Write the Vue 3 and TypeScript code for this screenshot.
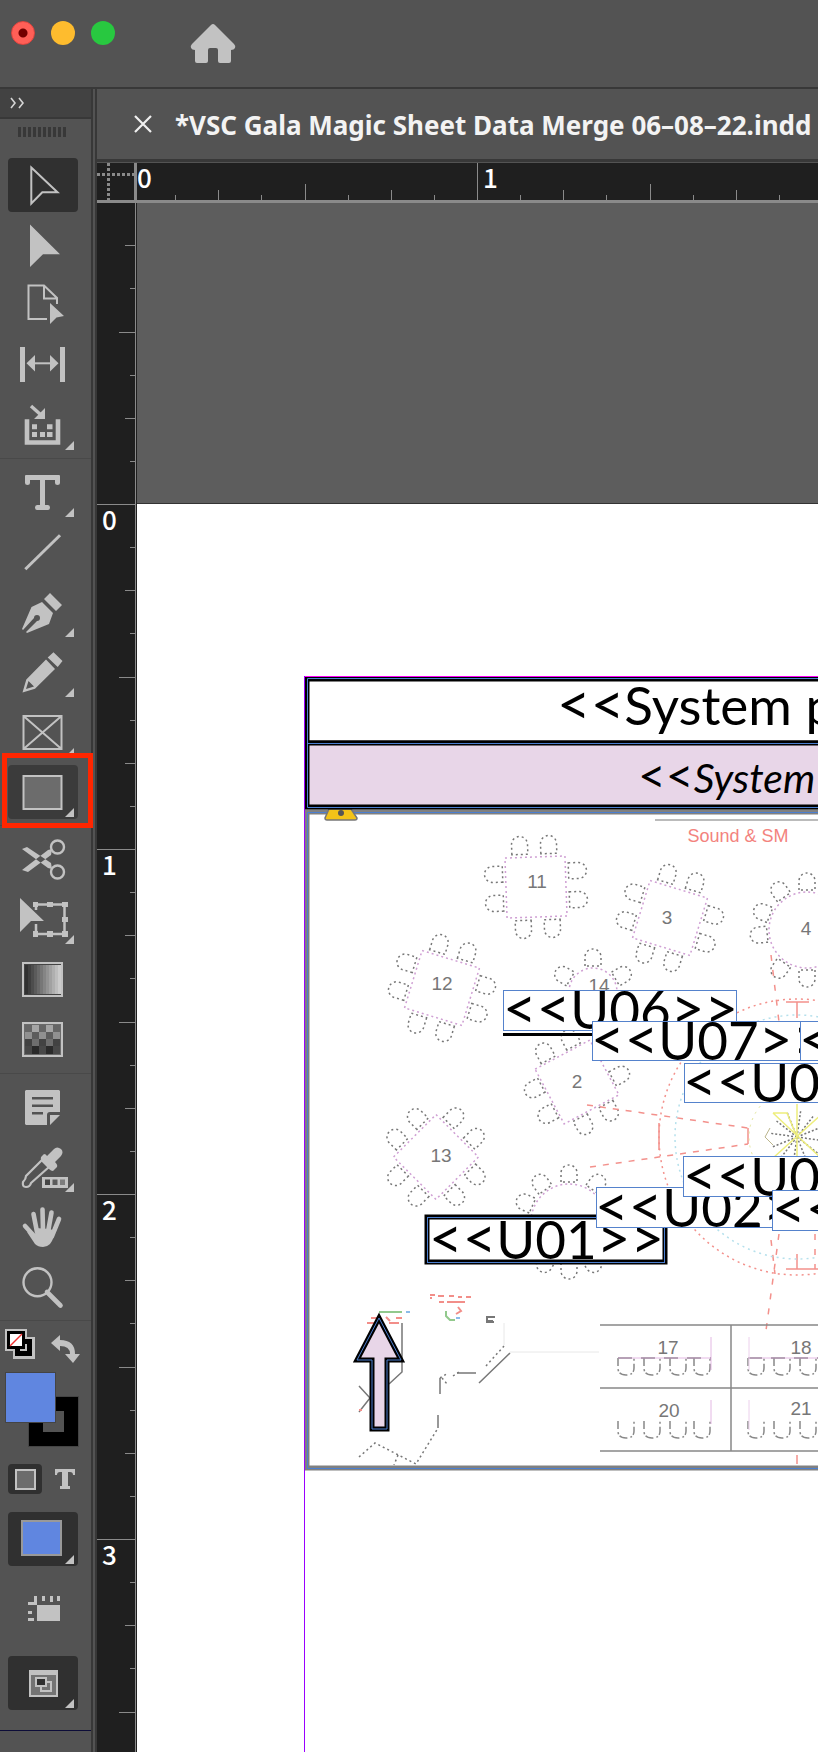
<script setup lang="ts">
interface Tool {
  id: string
  label: string
  more?: boolean
  active?: boolean
  marked?: boolean
}
interface Table {
  label: string
  x: number
  y: number
  lx: number
  ly: number
  turn: number
  half: number
  round?: boolean
  angles?: number[]
}
interface Tag {
  name: string
  close: string
  x: number
  y: number
  w: number
  h: number
  tx: number
  base: number
}

const groups: Tool[][] = [
  [
    { id: 'select', label: 'Selection Tool', active: true },
    { id: 'direct', label: 'Direct Selection Tool' },
    { id: 'page', label: 'Page Tool' },
    { id: 'gap', label: 'Gap Tool' },
    { id: 'collect', label: 'Content Collector Tool', more: true },
  ],
  [
    { id: 'type', label: 'Type Tool', more: true },
    { id: 'line', label: 'Line Tool' },
    { id: 'pen', label: 'Pen Tool', more: true },
    { id: 'pencil', label: 'Pencil Tool', more: true },
    { id: 'frame', label: 'Rectangle Frame Tool', more: true },
    { id: 'rect', label: 'Rectangle Tool', more: true, marked: true },
  ],
  [
    { id: 'scissors', label: 'Scissors Tool' },
    { id: 'transform', label: 'Free Transform Tool', more: true },
    { id: 'gradient', label: 'Gradient Swatch Tool' },
    { id: 'feather', label: 'Gradient Feather Tool' },
  ],
  [
    { id: 'note', label: 'Note Tool' },
    { id: 'dropper', label: 'Color Theme Tool', more: true },
    { id: 'hand', label: 'Hand Tool' },
    { id: 'zoom', label: 'Zoom Tool' },
  ],
]

const INCH = 345
const tickLength = (i: number, full: number): number =>
  i % 8 === 0 ? full : i % 4 === 0 ? 16 : i % 2 === 0 ? 10 : 5
const hTicks = Array.from({ length: 64 }, (_, k) => k + 1).map((i) => ({
  at: Math.round((i * INCH) / 8) - 4,
  size: tickLength(i, 37),
}))
const vTicks = Array.from({ length: 46 }, (_, k) => k - 6).map((i) => ({
  at: 301 + Math.round((i * INCH) / 8),
  size: tickLength(i, 38),
}))
const hLabels = [{ n: 0, x: 0 }, { n: 1, x: 346 }]
const vLabels = [0, 1, 2, 3].map((n) => ({ n, y: 327 + n * INCH }))

const tables: Table[] = [
  { label: '11', x: 533, y: 887, lx: 534, ly: 888, turn: -2, half: 30 },
  { label: '3', x: 667, y: 918, lx: 664, ly: 924, turn: 17, half: 30 },
  { label: '12', x: 439, y: 988, lx: 439, ly: 990, turn: 17, half: 30 },
  { label: '2', x: 574, y: 1082, lx: 574, ly: 1088, turn: -28, half: 31 },
  { label: '13', x: 433, y: 1157, lx: 438, ly: 1162, turn: 45, half: 30 },
  { label: '4', x: 804, y: 930, lx: 803, ly: 935, turn: 0, half: 38, round: true, angles: [-96, -68, -35, 0, 30, 150, 180, 215] },
  { label: '14', x: 590, y: 992, lx: 596, ly: 992, turn: 0, half: 24, round: true, angles: [-60, 0, 60] },
  { label: '', x: 566, y: 1222, lx: 566, ly: 1222, turn: 0, half: 38, round: true, angles: [-66, -36, 0, 36, 150, 180, 210] },
]
const seats = [0, 90, 180, 270].flatMap((a) => [
  { a, dx: -15 },
  { a, dx: 14 },
])

const tags: Tag[] = [
  { name: 'U02', close: '>>', x: 596, y: 1187, w: 230, h: 40, tx: 595, base: 1227 },
  { name: 'U0', close: '', x: 683, y: 1156, w: 230, h: 40, tx: 683, base: 1196 },
  { name: '', close: '', x: 772, y: 1190, w: 230, h: 40, tx: 772, base: 1229 },
  { name: 'U06', close: '>>', x: 503, y: 990, w: 233, h: 40, tx: 503, base: 1029 },
  { name: 'U07', close: '>>', x: 592, y: 1021, w: 230, h: 39, tx: 591, base: 1060 },
  { name: '', close: '', x: 800, y: 1021, w: 230, h: 39, tx: 799, base: 1060 },
  { name: 'U0', close: '', x: 684, y: 1063, w: 230, h: 39, tx: 683, base: 1102 },
]
const rays = Array.from({ length: 12 }, (_, k) => k * 30 + 8)
const booths = [1358, 1421]
const stools = [615, 641, 667, 691, 745, 771, 797]
</script>

<template>
  <div class="app">
    <header class="titlebar">
      <div class="lights">
        <button class="light red" aria-label="Close window"></button>
        <button class="light yellow" aria-label="Minimize window"></button>
        <button class="light green" aria-label="Zoom window"></button>
      </div>
      <button class="home" aria-label="Home">
        <svg width="46" height="40" viewBox="0 0 46 40">
          <path d="M23 0Q24 0 25 1L44 20Q46 22 45 24Q44 26 41 26V37Q41 39 39 39H30Q28 39 28 37V26Q28 24 26 24H20Q18 24 18 26V37Q18 39 16 39H7Q5 39 5 37V26Q2 26 1 24Q0 22 2 20L21 1Q22 0 23 0Z" fill="#c2c2c2" />
        </svg>
      </button>
    </header>

    <div class="workspace">
      <aside class="tools">
        <button class="expand" aria-label="Expand panel">
          <svg width="16" height="12" viewBox="0 0 16 12">
            <path d="M2 1L6 6L2 11M10 1L14 6L10 11" fill="none" stroke="#d5d5d5" stroke-width="1.6" />
          </svg>
        </button>
        <div class="grip"></div>

        <div v-for="(group, g) in groups" :key="g" class="group">
          <button
            v-for="tool in group"
            :key="tool.id"
            class="tool"
            :class="{ active: tool.active, marked: tool.marked }"
            :aria-label="tool.label"
          >
            <svg viewBox="8 -27 70 54" width="70" height="54" class="icon">
              <path v-if="tool.id === 'select'" d="M31.3-17.5L57.5 7.3H42.3L31.3 18.5Z" class="ln" />
              <path v-else-if="tool.id === 'direct'" d="M30-20.5L60 9.3H43L30 22Z" />
              <template v-else-if="tool.id === 'page'">
                <path d="M47 14H28.5V-19.5H44L57-7V-1M44-19.5V-6.5H57" class="ln" />
                <path d="M50-2L64 11L56.5 12.5L50 19Z" />
              </template>
              <template v-else-if="tool.id === 'gap'">
                <path d="M20-18H25V17H20ZM60-18H65V17H60ZM26.5-1.7L35-10V6.5ZM58.5-1.7L50-10V6.5Z" />
                <path d="M34-1.7H51" class="ln" />
              </template>
              <template v-else-if="tool.id === 'collect'">
                <path d="M27-5.7V17.5H58V-5.7" class="ln" stroke-width="4.6" />
                <path d="M32-.7H37V4.300H32ZM47-.7H52.500V4.300H47ZM32 7H37V12H32ZM40 7H45V12H40ZM47 7H52.500V12H47ZM45-17V-6H34Z" />
                <path d="M31-19L41-10" class="ln" stroke-width="3.4" />
              </template>
              <path v-else-if="tool.id === 'type'" d="M26-17H59Q60-17 60-16V-9Q60-7 57.500-7Q55-7 55-9V-12H45V13H48Q50 13 50 15.500Q50 18 48 18H37Q35 18 35 15.500Q35 13 37 13H40V-12H30V-9Q30-7 27.500-7Q25-7 25-9V-16Q25-17 26-17Z" />
              <path v-else-if="tool.id === 'line'" d="M25.300 17.300L60-16.700" class="ln" stroke-width="3" />
              <template v-else-if="tool.id === 'pen'">
                <path d="M50-19L62-7L56-1L44-13ZM42-10L53 1L49 12L27 21L26 20L37 9A3 3 0 1 0 34 6L23 18L22 17L31.500-5Z" />
              </template>
              <template v-else-if="tool.id === 'pencil'">
                <path fill-rule="evenodd" d="M53.500-19.700L62.500-11L57.700-5L47.700-14.500ZM46-12.500L55-3L35 16.700L22.500 20.500L26.300 7.500ZM28.500 9L26 17L34 14.500Z" />
              </template>
              <path v-else-if="tool.id === 'frame'" d="M23.500-16H61.500V17H23.500ZL61.500 17M61.500-16L23.500 17" class="ln" />
              <rect v-else-if="tool.id === 'rect'" x="23.500" y="-16" width="38" height="33" fill="#6c6c6c" stroke="#c2c2c2" stroke-width="2" />
              <template v-else-if="tool.id === 'scissors'">
                <path d="M22-10L27-12L51 4L52 10L48 9ZM22 11L28 13L51-4L52-10L48-9Z" />
                <circle cx="57.500" cy="-12" r="6.500" class="ln" stroke-width="2.400" />
                <circle cx="57.500" cy="13" r="6.500" class="ln" stroke-width="2.400" />
              </template>
              <template v-else-if="tool.id === 'transform'">
                <path d="M36-9V-14.500H64.500V15H36V5" class="ln" stroke-width="2.500" />
                <path d="M20-21L44 2H31L20 13ZM33-17H38V-12H33ZM47-17H53V-12H47ZM62-17H68V-12H62ZM62-2H68V3H62ZM62 12H68V18H62ZM47 12H53V18H47ZM33 12H38V18H33Z" />
              </template>
              <template v-else-if="tool.id === 'gradient'">
                <rect x="23" y="-16" width="39" height="33" fill="#444" class="edge" />
                <rect v-for="n in 12" :key="n" :x="22 + n * 3" y="-14" width="3" height="29" :fill="`rgb(${35 + n * 14},${35 + n * 14},${35 + n * 14})`" />
              </template>
              <template v-else-if="tool.id === 'feather'">
                <rect x="23" y="-16" width="39" height="33" fill="#6b6b6b" class="edge" />
                <template v-for="r in 4" :key="r">
                  <rect v-for="c in 5" :key="c" :x="18 + c * 7" :y="-21 + r * 7" width="7" height="8" :fill="(r + c) % 2 ? ['#a5a5a5', '#909090', '#6e6e6e', '#484848'][r - 1] : ['#666', '#5c5c5c', '#424242', '#2a2a2a'][r - 1]" />
                </template>
              </template>
              <template v-else-if="tool.id === 'note'">
                <path fill-rule="evenodd" d="M26-17H59L60-16V5H50Q47 5 47 8V18H26L25 17V-16ZM32-10V-7.500H53V-10ZM32-2.500V0H53V-2.500ZM32 5V7.500H43V5ZM50 8H60L50 18Z" />
              </template>
              <template v-else-if="tool.id === 'dropper'">
                <path d="M42-7L26 9Q26 12 23 15Q22 20 26 20Q30 20 31 16L49 0" class="ln" stroke-width="2.200" />
                <path d="M41-10L44-13Q46-13 47-11L54-18Q57-21 61-18Q64-15 61-11L55-5Q58-2 57 0L53 4Q51 4 49 2L42-5Q40-8 41-10Z" />
                <path d="M42 10H68V21H42Z" />
                <path d="M45 12.500H50V18H45Z" fill="#444" />
                <path d="M52.500 12.500H57.500V18H52.500Z" fill="#5c5c5c" />
                <path d="M60 12.500H65V18H60Z" fill="#7d7d7d" />
              </template>
              <template v-else-if="tool.id === 'hand'">
                <path d="M42.500-17.500L43 4M33.500-13L37 5M51.500-14.500L48 5M59-8L52 9M25-1L36 11" class="ln" stroke-width="4.600" stroke-linecap="round" />
                <path d="M35 1L50 2L55 4Q54 12 50 17Q47 20 43 20Q38 20 35 17L27 5L36 7Z" />
              </template>
              <template v-else-if="tool.id === 'zoom'">
                <circle cx="37.500" cy="-4.700" r="14" class="ln" stroke-width="2.400" />
                <path d="M47 5L60.500 18.500" class="ln" stroke-width="4.600" stroke-linecap="round" />
              </template>
              <path v-if="tool.more" d="M74 16V25H65Z" />
            </svg>
          </button>
        </div>

        <div class="minis">
          <button class="plain" aria-label="Default fill and stroke">
            <svg width="30" height="30" viewBox="0 0 30 30">
              <path d="M0 0H22V8H30V30H8V22H0Z" fill="#c2c2c2" />
              <path d="M2 2H20V10H27V27H10V20H2Z" fill="#000" />
              <path d="M15 20H20V15H22V22H15Z" fill="#c2c2c2" />
              <path d="M5 5H17V17H5Z" fill="#fff" />
              <path d="M5 17L17 5" stroke="#f03030" stroke-width="1.500" />
            </svg>
          </button>
          <button class="plain" aria-label="Swap fill and stroke">
            <svg width="30" height="30" viewBox="0 0 30 30">
              <path d="M0 8L9 0V5Q24 5 24 19H29L22 28L14 19H19Q19 11 9 11V16Z" fill="#c2c2c2" />
            </svg>
          </button>
        </div>

        <div class="swatches">
          <button class="stroke" aria-label="Stroke"></button>
          <button class="fill" aria-label="Fill"></button>
        </div>

        <div class="affects">
          <button class="affect on" aria-label="Formatting affects container"><span class="box"></span></button>
          <button class="affect" aria-label="Formatting affects text">
            <svg width="22" height="22" viewBox="0 0 22 22">
              <path d="M1 1H21V7H19Q19 4 16 4H14V18H16V21H6V18H8V4H6Q3 4 3 7H1Z" fill="#c2c2c2" />
            </svg>
          </button>
        </div>

        <button class="tool active" aria-label="Apply color">
          <svg viewBox="8 -27 70 54" width="70" height="54" class="icon">
            <rect x="22" y="-18" width="39" height="34" fill="#6086e0" stroke="#999" stroke-width="2" />
            <path d="M74 16V25H65Z" />
          </svg>
        </button>
        <button class="tool view" aria-label="View options">
          <svg viewBox="8 -27 70 54" width="70" height="54" class="icon">
            <path d="M37-6H60V10H37ZM42-15H45V-10H42ZM50-15H53V-9H50ZM57-15H60V-10H57ZM28 0H32V3H28ZM28 7H34V10H28ZM34-15H37V-6H28V-9H34Z" />
          </svg>
        </button>
        <button class="tool active" aria-label="Screen mode">
          <svg viewBox="8 -27 70 54" width="70" height="54" class="icon">
            <path d="M30-12H57V13H30Z" fill="#747474" stroke="#c2c2c2" stroke-width="2" />
            <path d="M29-13H58V-8H29Z" />
            <path d="M41-1H51V8H41Z" class="ln" />
            <path d="M36-5H46V3H36Z" fill="#303030" stroke="#c2c2c2" stroke-width="2" />
            <path d="M74 16V25H65Z" />
          </svg>
        </button>
        <div class="endline"></div>
      </aside>

      <main class="document">
        <div class="tab">
          <button class="close" aria-label="Close document">
            <svg width="18" height="18" viewBox="0 0 18 18">
              <path d="M1 1L17 17M17 1L1 17" stroke="#f0f0f0" stroke-width="2.200" />
            </svg>
          </button>
          <h1>*VSC Gala Magic Sheet Data Merge 06–08–22.indd</h1>
        </div>

        <div class="board">
          <svg class="corner" width="40" height="40" viewBox="0 0 40 40">
            <path d="M0 11.500H38M11.500 0V38" stroke="#8a8a8a" stroke-width="3" stroke-dasharray="3 2" />
            <path d="M38.500 0V40M0 38.500H40" stroke="#8a8a8a" stroke-width="3" />
          </svg>
          <svg class="hruler" width="100%" height="40">
            <rect v-for="t in hTicks" :key="t.at" :x="t.at - 1" :y="37 - t.size" width="1" :height="t.size" fill="#8a8a8a" />
            <text v-for="l in hLabels" :key="l.n" :x="l.x" y="25" class="num">{{ l.n }}</text>
            <rect y="37" width="100%" height="3" fill="#8a8a8a" />
          </svg>
          <svg class="vruler" width="40" height="100%">
            <rect v-for="t in vTicks" :key="t.at" :x="38 - t.size" :y="t.at" :width="t.size" height="1" fill="#8a8a8a" />
            <text v-for="l in vLabels" :key="l.n" x="5" :y="l.y" class="num">{{ l.n }}</text>
            <rect x="38" width="1" height="100%" fill="#8a8a8a" />
          </svg>

          <svg class="canvas" width="100%" height="100%">
            <rect y="301" width="100%" height="100%" fill="#fff" />
            <rect y="300" width="100%" height="1" fill="#333" />
            <g transform="translate(-137 -203)">
              <!-- floor plan -->
              <g class="plan" transform="translate(3 0)">
                <path d="M652 820H900" stroke="#bbb" stroke-width="2" />
                <text x="735" y="842" class="red-label">Sound &amp; SM</text>
                <g v-for="(t, i) in tables" :key="i">
                  <g :transform="`translate(${t.x} ${t.y}) rotate(${t.turn})`" fill="none">
                    <template v-if="t.round">
                      <circle :r="t.half" class="edge-line" />
                      <path v-for="a in t.angles" :key="a" :transform="`rotate(${a})`" :d="`M-8 ${-t.half - 2}V${-t.half - 11}A8 8 0 0 1 8 ${-t.half - 11}V${-t.half - 2}Z`" class="seat" />
                    </template>
                    <template v-else>
                      <rect :x="-t.half" :y="-t.half" :width="t.half * 2" :height="t.half * 2" class="edge-line" />
                      <path v-for="(s, k) in seats" :key="k" :transform="`rotate(${s.a})`" :d="`M${s.dx - 8} -33V-43A8 8 0 0 1 ${s.dx + 8} -43V-33Z`" class="seat" />
                    </template>
                  </g>
                  <text v-if="t.label" :x="t.lx" :y="t.ly" class="plan-num">{{ t.label }}</text>
                </g>

                <g fill="none" stroke="#f3918c" stroke-width="1.500">
                  <circle cx="794" cy="1137" r="138" stroke-dasharray="2 4" />
                  <path d="M584 1105L745 1128M587 1167L745 1144" stroke-dasharray="6 7" />
                  <path d="M745 1128V1144M656 1123V1150M794 1002V1018M783 1002H806M783 1269H820M794 1254V1269M794 1455V1464" />
                  <path d="M768 955L776 1022M768 1240L772 1274M776 1234L762 1338M812 1234V1269" stroke-dasharray="6 9" />
                  <circle cx="794" cy="1137" r="122" stroke="#b5e0ec" stroke-dasharray="2 4" />
                </g>
                <circle cx="794" cy="1137" r="48" fill="none" stroke="#e2e59a" stroke-dasharray="2 5" />
                <path v-for="a in rays" :key="a" :transform="`rotate(${a} 794 1137)`" d="M794 1137V1110" stroke="#777" stroke-width="1.500" stroke-dasharray="2 2" />
                <path d="M794 1104V1170M770 1113L820 1160M820 1113L770 1158M770 1113H784L794 1137" fill="none" stroke="#eeee7c" stroke-width="1.500" />
                <path d="M767 1128L762 1137L770 1145" fill="none" stroke="#bbb58c" />

                <g fill="none" stroke="#888" stroke-width="1.500">
                  <path d="M597 1325H900M597 1388H900M597 1451H900M728 1325V1451" />
                  <template v-for="b in booths" :key="b">
                    <path v-for="s in stools" :key="s" :d="`M${s} ${b}V${b + 10}Q${s} ${b + 17} ${s + 8} ${b + 17}Q${s + 16} ${b + 17} ${s + 16} ${b + 10}V${b}`" stroke-dasharray="8 3 2 2" />
                  </template>
                  <path d="M615 1358H708M745 1358H818" stroke-dasharray="14 9" />
                </g>
                <path d="M615 1358H708M745 1358H818M708 1337V1370M708 1400V1424" fill="none" stroke="#d79ad7" opacity=".7" />
                <path d="M746 1337V1370M746 1400V1430" fill="none" stroke="#ecd0ec" />
                <text x="665" y="1354" class="plan-num">17</text>
                <text x="798" y="1354" class="plan-num">18</text>
                <text x="666" y="1417" class="plan-num">20</text>
                <text x="798" y="1415" class="plan-num">21</text>

                <g fill="none" stroke="#777" stroke-width="1.500">
                  <path d="M399 1323V1372L386 1384M356 1386L367 1398L356 1412M437 1378V1394M435 1415V1428M454 1373H473M476 1383L507 1353" />
                  <path d="M356 1457L372 1443L413 1464L435 1428M395 1455L391 1465M437 1378L445 1373M439 1378L444 1384M450 1376L456 1372M483 1366L501 1346" stroke-dasharray="2 3" />
                  <path d="M492 1317H484V1321H490M484 1321V1322H491" stroke-width="2" />
                </g>
                <path d="M501 1323V1345M507 1352H596" stroke="#e8e8e8" fill="none" />
                <path d="M427 1295H432M428 1297V1299M435 1296H441M446 1296H451M455 1297H459M463 1297H468M444 1302H462M436 1302H441M455 1307L458 1311L453 1314M368 1318H378M383 1317L387 1321M393 1318H399M364 1323H372M386 1323H396M356 1410H359" fill="none" stroke="#f28e89" stroke-width="2" />
                <path d="M376 1312H399M443 1311V1316L447 1320H452" fill="none" stroke="#92c98d" stroke-width="2" />
                <path d="M403 1312H407M453 1318H457" stroke="#8bbbe9" stroke-width="2" />
              </g>

              <!-- image frame, header rows and margin guides -->
              <path d="M4000 812H307V1468H4000" fill="none" stroke="#808080" stroke-width="5" />
              <path d="M4000 812.500H307.500V1468.500H4000" fill="none" stroke="#4b7fd0" stroke-width="1" />
              <path d="M329 809H351L357 818Q357 820 355 820H327Q325 820 325 818Z" fill="#f3c318" stroke="#777" stroke-width="1.500" />
              <circle cx="341" cy="813" r="3" fill="#555" />
              <rect x="307" y="679" width="4000" height="64" fill="#fff" stroke="#000" stroke-width="5" />
              <rect x="307" y="743" width="4000" height="64" fill="#e8d6e8" stroke="#000" stroke-width="5" />
              <path d="M4000 678.500H307.500V807.500H4000M307 743.500H4000" fill="none" stroke="#4b7fd0" />
              <path d="M304 676.500H4000" stroke="#ff00ff" />
              <path d="M304.500 676V4000" stroke="#9a00ff" />
              <text x="557" y="725" class="merge"><tspan class="mark">&lt;&lt;</tspan>System p</text>
              <text x="638" y="793" class="merge sub"><tspan class="sub-mark">&lt;&lt;</tspan><tspan class="slant">System</tspan></text>

              <!-- unit tags -->
              <rect x="427" y="1217" width="238" height="45" fill="#fff" stroke="#000" stroke-width="5" />
              <rect x="427.500" y="1217.500" width="237" height="45" fill="none" stroke="#4b7fd0" />
              <text x="429" y="1259" class="merge"><tspan class="mark">&lt;&lt;</tspan>U01<tspan class="mark">&gt;&gt;</tspan></text>
              <path d="M503 1034.500H600" stroke="#000" stroke-width="3" />
              <g v-for="(t, i) in tags" :key="i">
                <rect :x="t.x + 0.5" :y="t.y + 0.5" :width="t.w" :height="t.h" class="tag" />
                <text :x="t.tx" :y="t.base" class="merge"><tspan class="mark">&lt;&lt;</tspan>{{ t.name }}<tspan class="mark">{{ t.close }}</tspan></text>
              </g>

              <!-- arrow -->
              <path d="M379 1318L401 1360H387V1429H372V1360H357Z" fill="#e8d6e8" stroke="#000" stroke-width="5" />
              <path d="M379 1318L401 1360H387V1429H372V1360H357Z" fill="none" stroke="#4b7fd0" stroke-width="1" />
            </g>
          </svg>
        </div>
      </main>
    </div>
  </div>
</template>

<style>
body {
  margin: 0;
  background: #535353;
}
</style>

<style scoped>
.app {
  display: flex;
  flex-direction: column;
  min-height: 100vh;
  overflow: hidden;
  background: #535353;
  font-family: "Noto Sans", "Open Sans", sans-serif;
}
button {
  display: block;
  margin: 0;
  padding: 0;
  border: 0;
  background: none;
}
svg {
  display: block;
}
.titlebar {
  display: flex;
  align-items: flex-start;
  gap: 75px;
  height: 87px;
  padding-left: 11px;
  border-bottom: 2px solid #383838;
}
.lights {
  display: flex;
  gap: 16px;
  padding-top: 21px;
}
.light {
  width: 24px;
  height: 24px;
  border-radius: 50%;
}
.red {
  border: 1px solid #e0443e;
  background: radial-gradient(circle, #730000 0 4px, #ff5f57 5px);
}
.yellow {
  background: #febc2e;
}
.green {
  background: #28c840;
}
.home {
  padding-top: 24px;
}
.workspace {
  display: flex;
  flex: 1;
}
.tools {
  flex: none;
  width: 91px;
  border-right: 2px solid #383838;
}
.expand {
  width: 100%;
  height: 30px;
  padding-left: 9px;
  background: #424242;
  border-bottom: 2px solid #383838;
}
.grip {
  height: 10px;
  margin: 8px 25px 21px 18px;
  background: repeating-linear-gradient(90deg, #383838 0 3px, #535353 3px 5px);
}
.group {
  display: flex;
  flex-direction: column;
  gap: 6px;
  margin-bottom: 6px;
  padding-bottom: 6px;
  border-bottom: 1px solid #494949;
}
.group:nth-child(5) {
  padding-bottom: 7px;
}
.tool {
  position: relative;
  width: 70px;
  height: 54px;
  margin-left: 8px;
  border-radius: 4px;
}
.active {
  background: #303030;
}
.marked {
  background: #3b3b3b;
}
.marked::after {
  content: "";
  position: absolute;
  z-index: 1;
  inset: -12px -15px -9px -6px;
  border: 5px solid #ff2600;
}
.icon {
  fill: #c2c2c2;
  stroke-width: 2;
}
.ln {
  fill: none;
  stroke: #c2c2c2;
}
.edge {
  stroke: #c2c2c2;
}
.minis {
  display: flex;
  align-items: flex-start;
  gap: 16px;
  padding: 2px 0 8px 5px;
}
.plain:last-child {
  padding-top: 6px;
}
.swatches {
  display: grid;
  width: 72px;
  height: 73px;
  margin-left: 6px;
}
.swatches button {
  grid-area: 1 / 1;
  box-sizing: border-box;
  width: 49px;
  height: 49px;
}
.fill {
  background: #6086e0;
  outline: 1px solid #444;
}
.stroke {
  place-self: end;
  border: 14px solid #000;
  outline: 1px solid #444;
}
.affects {
  display: flex;
  gap: 6px;
  padding: 18px 0 18px 8px;
}
.affect {
  display: grid;
  place-items: center;
  width: 34px;
  height: 30px;
  border-radius: 4px;
}
.on {
  background: #303030;
}
.box {
  width: 17px;
  height: 17px;
  border: 2px solid #c2c2c2;
  background: #6c6c6c;
}
.view {
  margin-top: 18px;
  margin-bottom: 18px;
}
.endline {
  height: 1px;
  margin: 20px 0;
  background: #0d0d38;
}
.document {
  display: flex;
  flex: 1;
  flex-direction: column;
  min-width: 0;
  margin-left: 2px;
  border-left: 2px solid #383838;
}
.tab {
  display: flex;
  align-items: center;
  gap: 23px;
  height: 70px;
  padding-left: 37px;
  border-bottom: 3px solid #383838;
  margin-bottom: 1px;
}
.close {
  flex: none;
}
h1 {
  margin: 0;
  padding-top: 2px;
  color: #f3f3f3;
  font-size: 26px;
  font-weight: 700;
  line-height: 32px;
  white-space: nowrap;
}
.board {
  display: grid;
  flex: 1;
  grid-template: 40px 1fr / 40px 1fr;
  background: #1f1f1f;
}
.canvas {
  overflow: hidden;
  background: #5d5d5d;
}
.num {
  fill: #fff;
  font: 500 26px "Noto Sans CJK JP", sans-serif;
}
.plan {
  font-family: "Liberation Sans", Arial, sans-serif;
}
.plan-num {
  fill: #777;
  font-size: 19px;
  text-anchor: middle;
}
.red-label {
  fill: #f3837e;
  font-size: 18px;
  text-anchor: middle;
}
.seat {
  stroke: #777;
  stroke-width: 1.5;
  stroke-dasharray: 2 3;
}
.edge-line {
  stroke: #cf9fd3;
  stroke-width: 1.5;
  stroke-dasharray: 2 3;
}
.tag {
  fill: #fff;
  stroke: #5582cc;
}
.merge {
  fill: #000;
  font: 53px Lato, "Gill Sans", sans-serif;
}
.mark {
  font-size: 58px;
}
.sub {
  font-size: 41px;
}
.sub-mark {
  font-size: 48px;
}
.slant {
  font-style: italic;
}
</style>
